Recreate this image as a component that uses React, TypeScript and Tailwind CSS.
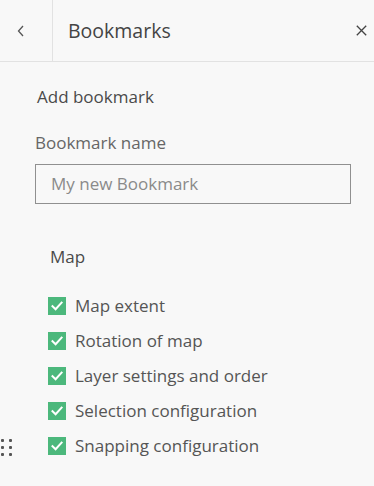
import React from "react";

const items = [
  "Map extent",
  "Rotation of map",
  "Layer settings and order",
  "Selection configuration",
  "Snapping configuration",
];

function Check() {
  return (
    <span className="flex h-[18px] w-[18px] shrink-0 items-center justify-center bg-[#4cb87c]">
      <svg width="14" height="14" viewBox="0 0 14 14" fill="none">
        <path d="M2.5 7.2 L5.6 10.2 L11.6 3.6" stroke="white" strokeWidth="2" strokeLinecap="square" strokeLinejoin="miter" />
      </svg>
    </span>
  );
}

export default function App() {
  return (
    <div
      className="relative h-[486px] w-[374px] overflow-hidden bg-[#f8f8f8] text-[#4a4a4a]"
      style={{ fontFamily: "'Open Sans', sans-serif" }}
    >
      <div className="flex h-[62px] border-b border-[#e2e2e2]">
        <div className="flex w-[53px] items-center justify-start border-r border-[#e2e2e2] pl-[17px]">
          <svg width="8" height="12" viewBox="0 0 8 12" fill="none">
            <path d="M6 1 L1.5 6 L6 11" stroke="#555" strokeWidth="1.3" />
          </svg>
        </div>
        <div className="flex flex-1 items-center pl-[15px] text-[19.5px] text-[#444]">Bookmarks</div>
        <div className="flex w-[18px] items-center justify-start">
          <svg width="11" height="11" viewBox="0 0 11 11" fill="none">
            <path d="M0.8 0.8 L10.2 10.2 M10.2 0.8 L0.8 10.2" stroke="#444" strokeWidth="1.3" />
          </svg>
        </div>
      </div>

      <div className="pl-[37px] pt-[25px] text-[17px] leading-[20px] text-[#4a4a4a]">Add bookmark</div>
      <div className="pl-[35px] pt-[26px] text-[17px] leading-[20px] text-[#666]">Bookmark name</div>
      <div className="pl-[35px] pr-[23px] pt-[11px]">
        <div className="flex h-[40px] items-center border border-[#909090] pl-[15px] text-[17px] text-[#8a8a8a]">
          My new Bookmark
        </div>
      </div>

      <div className="pl-[50px] pt-[43px] text-[17px] leading-[20px] text-[#4a4a4a]">Map</div>

      <div className="flex flex-col gap-[17px] pl-[48px] pt-[30px]">
        {items.map((t) => (
          <div key={t} className="flex h-[18px] items-center gap-[9px]">
            <Check />
            <span className="text-[17px] leading-[20px] text-[#555]">{t}</span>
          </div>
        ))}
      </div>

      <div className="absolute left-[1px] top-[439px] grid grid-cols-[3px_3px] gap-x-[5px] gap-y-[4px]">
        {[0, 1, 2, 3, 4, 5].map((i) => (
          <span key={i} className="h-[3px] w-[3px] rounded-[1px] bg-[#555]" />
        ))}
      </div>
    </div>
  );
}
